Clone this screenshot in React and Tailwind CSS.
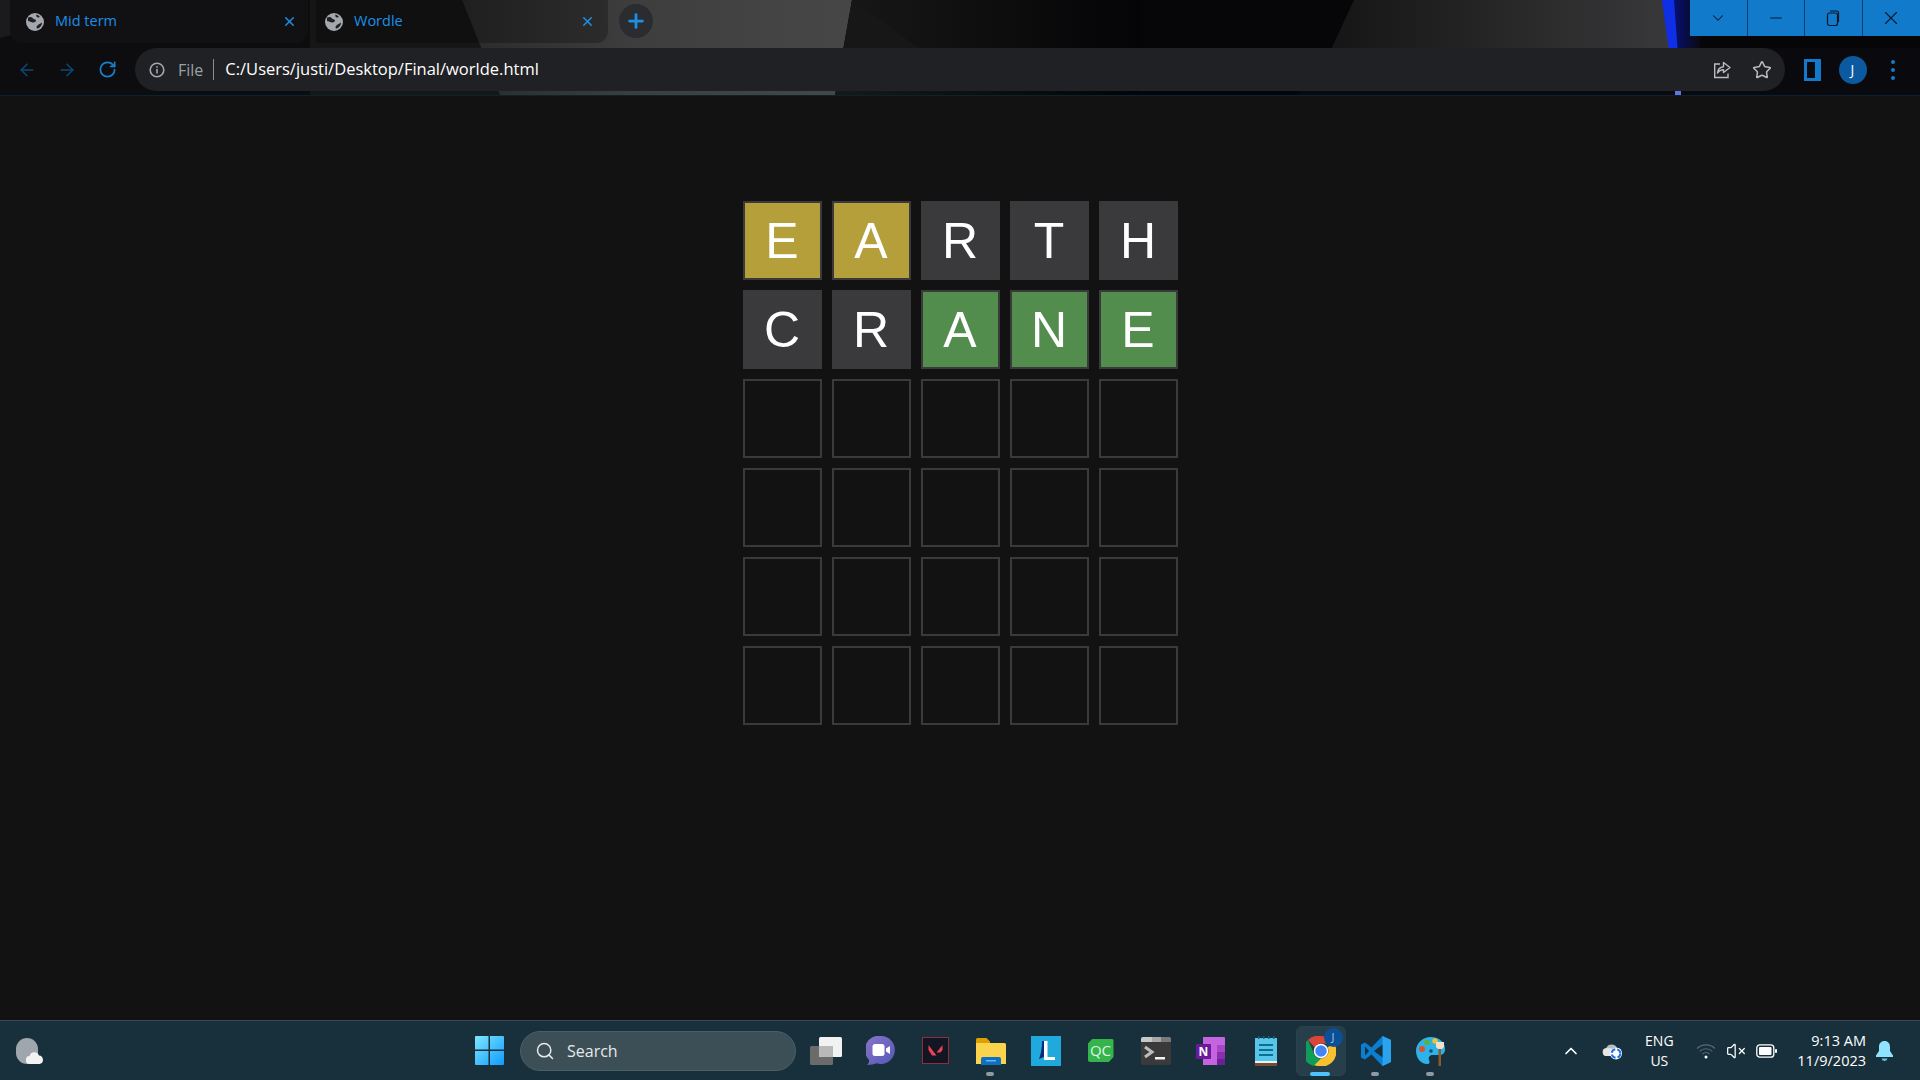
import { ArrowLeft, ArrowRight, RotateCw, Plus, X, Star, ChevronDown, ChevronUp, Minus, Search, VolumeX } from 'lucide-react';

const GUESSES = [
  [['E', 'y'], ['A', 'y'], ['R', 'x'], ['T', 'x'], ['H', 'x']],
  [['C', 'x'], ['R', 'x'], ['A', 'g'], ['N', 'g'], ['E', 'g']],
];

const TILE_COLORS = {
  y: 'bg-[#b59f3b]',
  g: 'bg-[#538d4e]',
  x: 'bg-[#3a3a3c]',
};

function Tile({ letter, state }) {
  return (
    <div className={`flex h-[79px] w-[79px] items-center justify-center border-2 border-[#3a3a3c] text-[50px] leading-none text-white ${state ? TILE_COLORS[state] : ''}`}>
      {letter}
    </div>
  );
}

function Board() {
  const rows = [...GUESSES, ...Array(4).fill(Array(5).fill(['', null]))];
  return (
    <div className="grid grid-cols-[repeat(5,79px)] gap-[10px] font-['Liberation_Sans',Arial,sans-serif]">
      {rows.flat().map(([letter, state], i) => (
        <Tile key={i} letter={letter} state={state} />
      ))}
    </div>
  );
}

function Wallpaper() {
  return (
    <svg className="absolute inset-0 h-[95px] w-full" viewBox="0 0 1920 95" preserveAspectRatio="none">
      <defs>
        <linearGradient id="wp-gray" x1="0" x2="1" y1="0" y2="0">
          <stop offset="0" stopColor="#2a2a2b" />
          <stop offset=".45" stopColor="#3e3e3e" />
          <stop offset="1" stopColor="#474747" />
        </linearGradient>
        <linearGradient id="wp-dark" x1="0" x2="1" y1="0" y2="0">
          <stop offset="0" stopColor="#181818" />
          <stop offset="1" stopColor="#040406" />
        </linearGradient>
        <linearGradient id="wp-right" x1="0" x2="1" y1="0" y2="0">
          <stop offset="0" stopColor="#131313" />
          <stop offset="1" stopColor="#39393b" />
        </linearGradient>
        <linearGradient id="wp-glow" x1="0" x2="1" y1="0" y2="0">
          <stop offset="0" stopColor="#06107a" />
          <stop offset="1" stopColor="#0a0a10" />
        </linearGradient>
      </defs>
      <rect width="1920" height="95" fill="#060608" />
      <polygon points="0,0 462,0 500,95 0,95" fill="#0d0d0f" />
      <polygon points="0,0 150,0 0,38" fill="#1b1b1e" />
      <polygon points="310,0 462,0 500,95 310,95" fill="#161617" />
      <polygon points="462,0 852,0 835,95 500,95" fill="url(#wp-gray)" />
      <polygon points="852,0 1140,0 1140,95 835,95" fill="url(#wp-dark)" />
      <polygon points="852,0 919,48 844,48" fill="#171717" />
      <polygon points="1354,0 1664,0 1676,95 1310,95" fill="url(#wp-right)" />
      <polygon points="1672,0 1700,0 1700,95 1680,95" fill="url(#wp-glow)" />
      <polygon points="1662,0 1674,0 1681,95 1675,95" fill="#0f2fe6" />
      <rect x="1300" y="91" width="375" height="4" fill="#0a0a0c" />
      <rect x="1675" y="91" width="6" height="4" fill="#6272e0" />
      <rect x="1681" y="48" width="239" height="47" fill="#0a0a0e" />
    </svg>
  );
}

function GlobeIcon() {
  return (
    <svg width="18" height="18" viewBox="0 0 18 18" className="shrink-0">
      <circle cx="9" cy="9" r="9" fill="#a4a7ad" />
      <path d="M2 4.500c2-1 4-.5 4.800.8.800 1.400 2.800.8 3.200 2 .4 1.300-1.400 2.400-3 2.200-1.800-.3-3.600-1.700-5-1.600z" fill="#202124" />
      <path d="M10.500 1.500c1.600.6 2.800 1.400 3.400 2.600-1 .6-2.800.4-3.400-.6-.3-.6-.3-1.300 0-2zM16 9.500c.2 2.600-1.600 5-4 6-1.400.3-1.800-1-1.200-2.200.8-1.800 3.200-2.300 5.200-3.800z" fill="#202124" />
    </svg>
  );
}

function Tab({ title, className }) {
  return (
    <div className={`flex h-[43px] w-[293px] shrink-0 items-center ${className}`}>
      <GlobeIcon />
      <span className="ml-[11px] flex-1 pb-[2px] text-[14.5px] leading-[18px] text-[#1c8fe8]">{title}</span>
      <X size={15} strokeWidth={2.4} className="text-[#1c8fe8]" />
    </div>
  );
}

function ShareIcon() {
  return (
    <svg width="20" height="20" viewBox="0 0 20 20" fill="none" stroke="#b9bcc0" strokeWidth="1.4">
      <path d="M8 4H2.700v13.500H16v-4" />
      <path d="M11.500 2.500 18 7.500l-6.500 5V9.700c-2.800 0-4.600 1.100-6 3.300.3-3.800 2.500-6 6-6.300z" strokeLinejoin="round" />
    </svg>
  );
}

function WindowButton({ children, last }) {
  return (
    <div className={`flex h-9 w-[57.5px] items-center justify-center bg-[#127acb] text-[#06192a] ${last ? '' : 'border-r border-[#0a3f6b]'}`}>
      {children}
    </div>
  );
}

function BrowserHeader() {
  return (
    <header className="relative h-[96px] shrink-0 border-b border-[#0b2231] font-['Open_Sans',sans-serif]">
      <Wallpaper />
      <div className="relative flex h-12 items-start">
        <Tab title="Mid term" className="ml-[10px] w-[298px] rounded-b-xl bg-[#111113] pl-4 pr-[11px]" />
        <Tab title="Wordle" className="ml-2 rounded-br-xl border-r border-[#3b3b3b] bg-black/25 pl-[9px] pr-[13px]" />
        <div className="ml-[10px] mt-1 flex h-[34px] w-[34px] items-center justify-center rounded-full bg-[#2b2c2f]">
          <Plus size={22} strokeWidth={3} className="text-[#1c8fe8]" />
        </div>
        <div className="ml-auto flex">
          <WindowButton><ChevronDown size={18} strokeWidth={1.4} /></WindowButton>
          <WindowButton><Minus size={18} strokeWidth={1.6} /></WindowButton>
          <WindowButton>
            <svg width="16" height="18" viewBox="0 0 16 18" fill="none" stroke="currentColor" strokeWidth="1.200">
              <rect x="2.500" y="4" width="10" height="12.500" rx="2" />
              <path d="M5 2h6.500a2 2 0 0 1 2 2v9" />
            </svg>
          </WindowButton>
          <WindowButton last><X size={22} strokeWidth={1.2} /></WindowButton>
        </div>
      </div>
      <div className="relative flex h-[43px] items-center">
        <div className="ml-[7px] flex">
          <div className="flex w-10 justify-center"><ArrowLeft size={20} strokeWidth={1.8} className="text-[#0b4a75]" /></div>
          <div className="flex w-10 justify-center"><ArrowRight size={20} strokeWidth={1.8} className="text-[#0b4a75]" /></div>
          <div className="flex w-10 justify-center"><RotateCw size={19} strokeWidth={2.2} className="text-[#1a7fc9]" /></div>
        </div>
        <div className="ml-2 flex h-[43px] flex-1 items-center rounded-full bg-[#202124] pl-[14px] pr-[13px]">
          <svg width="16" height="16" viewBox="0 0 16 16" fill="none" stroke="#a4a7ad" strokeWidth="1.6">
            <circle cx="8" cy="8" r="6.800" />
            <path d="M8 7v4.500M8 4.200v1.500" />
          </svg>
          <span className="ml-[13px] text-[16px] text-[#9aa0a6]">File</span>
          <span className="ml-[10px] h-[21px] w-px bg-[#8a8d91]" />
          <span className="ml-[11px] text-[16.5px] text-white">C:/Users/justi/Desktop/Final/worlde.html</span>
          <div className="ml-auto flex items-center gap-5">
            <ShareIcon />
            <Star size={20} strokeWidth={1.8} className="text-[#b9bcc0]" />
          </div>
        </div>
        <div className="flex w-[135px] items-center pl-[7px]">
          <div className="flex w-10 justify-center">
            <svg width="17" height="22" viewBox="0 0 17 22">
              <path d="M0 0h17v22H0zM3 3v16h8V3z" fillRule="evenodd" fill="#127acb" />
            </svg>
          </div>
          <div className="flex w-[41px] justify-center">
            <div className="flex h-7 w-7 items-center justify-center rounded-full bg-[#0b5aa0] text-sm text-white">J</div>
          </div>
          <div className="flex w-[39px] flex-col items-center gap-[4px]">
            <i className="h-1 w-1 rounded-full bg-[#127acb]" />
            <i className="h-1 w-1 rounded-full bg-[#127acb]" />
            <i className="h-1 w-1 rounded-full bg-[#127acb]" />
          </div>
        </div>
      </div>
    </header>
  );
}

function StartLogo() {
  return (
    <svg width="29" height="29" viewBox="0 0 29 29">
      <defs>
        <linearGradient id="win" x1="0" y1="0" x2="1" y2="1">
          <stop offset="0" stopColor="#7fe6ff" />
          <stop offset="1" stopColor="#0f9bff" />
        </linearGradient>
      </defs>
      <path d="M0 1a1 1 0 0 1 1-1h12.500v13.500H0zM15 0h13a1 1 0 0 1 1 1v12.500H15zM0 15h13.500v14H1a1 1 0 0 1-1-1zM15 15h14v13a1 1 0 0 1-1 1H15z" fill="url(#win)" />
    </svg>
  );
}

function TaskView() {
  return (
    <svg width="32" height="28" viewBox="0 0 32 28">
      <rect x="0" y="9" width="23" height="19" rx="1.500" fill="#6b6b6b" />
      <rect x="9" y="0" width="23" height="20" rx="1.500" fill="#f2f2f2" />
      <rect x="9" y="9" width="14" height="11" fill="#b9b9b9" />
    </svg>
  );
}

function ChatIcon() {
  return (
    <svg width="29" height="29" viewBox="0 0 29 29">
      <defs>
        <linearGradient id="chat" x1="0" y1="0" x2="1" y2="1">
          <stop offset="0" stopColor="#8a74c8" />
          <stop offset="1" stopColor="#5458b8" />
        </linearGradient>
      </defs>
      <path d="M15 0a14 14 0 1 1-4.500 27.300C8 28.500 5 29 1 29c1.600-1.500 2.200-3.200 2-5.200A14 14 0 0 1 15 0z" fill="url(#chat)" />
      <rect x="6.500" y="8" width="12" height="12" rx="2.500" fill="#fff" />
      <path d="M20 12.500 24 10v8l-4-2.500z" fill="#fff" />
    </svg>
  );
}

function ValorantIcon() {
  return (
    <svg width="27" height="27" viewBox="0 0 27 27">
      <rect x=".5" y=".5" width="26" height="26" fill="#111622" stroke="#8e2f3c" />
      <path d="M6.500 8 14.500 18.500H10L6.500 13zM20.500 8v5l-2 2.500h-4z" fill="#ee4155" />
    </svg>
  );
}

function FolderIcon() {
  return (
    <svg width="30" height="28" viewBox="0 0 30 28">
      <path d="M0 2.500A1.500 1.500 0 0 1 1.500 1h9l3.500 3.500v3H0z" fill="#dca000" />
      <path d="M0 6h28.500A1.500 1.500 0 0 1 30 7.500V27H0z" fill="#fcd34d" />
      <rect x="5" y="21" width="20" height="7" fill="#fbbf24" />
      <path d="M5 22a2 2 0 0 1 2-2h16a2 2 0 0 1 2 2v6H5z" fill="#0f6fc0" />
      <rect x="10" y="23" width="10" height="1.500" fill="#65b6f0" />
    </svg>
  );
}

function LIcon() {
  return (
    <div className="relative flex h-[30px] w-[30px] items-center justify-center bg-[#1fa9dc]">
      <svg width="30" height="30" viewBox="0 0 30 30">
        <path d="M11 5h4v15l-7 3c2-5 3-12 3-18z" fill="#0b2a7a" />
        <path d="M13 5h3.500v16H24v3H13z" fill="#fff" />
      </svg>
    </div>
  );
}

function QtIcon() {
  return (
    <div className="flex h-[23px] w-[26px] items-center justify-center rounded-[2px] bg-[#35b44c] text-[15px] leading-none text-[#dff5e2] [clip-path:polygon(18%_0,100%_0,100%_78%,82%_100%,0_100%,0_22%)]">
      QC
    </div>
  );
}

function TerminalIcon() {
  return (
    <svg width="30" height="28" viewBox="0 0 30 28">
      <rect width="30" height="28" rx="2" fill="#3a3a3a" />
      <path d="M2 0h9v5H0V2a2 2 0 0 1 2-2z" fill="#c8c8c8" />
      <rect x="11" y="0" width="9" height="5" fill="#a8a8a8" />
      <path d="M20 0h8a2 2 0 0 1 2 2v3H20z" fill="#7a7a7a" />
      <path d="m4 10 7 5-7 5" fill="none" stroke="#bdbdbd" strokeWidth="3" />
      <rect x="14" y="20" width="10" height="2.500" fill="#f2f2f2" />
    </svg>
  );
}

function OneNoteIcon() {
  return (
    <svg width="29" height="28" viewBox="0 0 29 28">
      <path d="M7 0h21a1 1 0 0 1 1 1v26a1 1 0 0 1-1 1H7z" fill="#c564e0" />
      <rect x="21" y="8" width="8" height="7" fill="#a946c8" />
      <rect x="21" y="15" width="8" height="7" fill="#8b2fae" />
      <rect x="21" y="22" width="8" height="6" fill="#6d1f95" />
      <rect x="0" y="7" width="15" height="15" rx="1" fill="#6a1b9a" />
      <text x="7.500" y="19" textAnchor="middle" fontSize="12" fontWeight="700" fill="#fff" fontFamily="Open Sans">N</text>
    </svg>
  );
}

function NotepadIcon() {
  return (
    <svg width="22" height="30" viewBox="0 0 22 30">
      <path d="M0 2h22v26H0z" fill="#58c6e8" />
      <path d="M0 26h22v4H0z" fill="#7a4a2a" />
      <path d="M0 25h22v2H0z" fill="#dff3fa" />
      <path d="M3 0h1.500v3H3zM8 0h1.500v3H8zM13 0h1.500v3H13zM18 0h1.500v3H18z" fill="#16627f" />
      <path d="M4 8h14v2H4zM4 13h14v2H4zM4 18h14v2H4z" fill="#0f6d8f" />
    </svg>
  );
}

function ChromeIcon() {
  return (
    <div className="relative h-[30px] w-[30px]">
      <svg width="30" height="30" viewBox="0 0 30 30">
        <path d="M15 0a15 15 0 0 1 13 7.500H15a7.500 7.500 0 0 0-6.500 3.800L2 3.900A15 15 0 0 1 15 0z" fill="#db4437" />
        <path d="M2 3.900 8.500 19a7.500 7.500 0 0 0 6.500 3.500L8.500 30A15 15 0 0 1 2 3.900z" fill="#0f9d58" />
        <path d="M28 7.500A15 15 0 0 1 8.500 29l6.500-6.500a7.500 7.500 0 0 0 6.500-11.200z" fill="#fbc02d" />
        <circle cx="15" cy="15" r="6.500" fill="#4285f4" stroke="#fff" strokeWidth="1.500" />
      </svg>
      <div className="absolute -right-[7px] -top-2 flex h-[19px] w-[19px] items-center justify-center rounded-full bg-[#0b4f96] text-[11px] text-[#9fc6ee]">J</div>
    </div>
  );
}

function VSCodeIcon() {
  return (
    <svg width="30" height="30" viewBox="0 0 30 30">
      <path d="M21.500 0 30 4v22l-8.500 4-11-11.500L4 23.500 0 21.500V8.500l4-2 6.500 5z" fill="#0a7fd1" />
      <path d="M21.500 0 30 4v22l-8.500 4z" fill="#2aa3ef" />
      <path d="M21.500 8.500v13L13 15z" fill="#18303b" />
      <path d="M4 10.500 8 15l-4 4.500z" fill="#18303b" />
    </svg>
  );
}

function PaintIcon() {
  return (
    <svg width="30" height="30" viewBox="0 0 30 30">
      <path d="M15 1C7 1 0 7 0 15c0 7 5 13 11 13 3 0 3-2 2-4-1-3 1-5 4-5h6c4 0 6-2 6-6C29 6 23 1 15 1z" fill="#2fb1ea" />
      <circle cx="6" cy="13" r="3" fill="#d9542b" />
      <circle cx="11" cy="6.500" r="2.700" fill="#5cb531" />
      <circle cx="19" cy="5" r="2.700" fill="#f4c12a" />
      <circle cx="15" cy="15" r="1.800" fill="#12506e" />
      <rect x="22.500" y="11" width="2.500" height="19" fill="#8a5a2b" />
      <path d="M20 6h8v5l-2 2h-4l-2-2z" fill="#f2e3c6" />
    </svg>
  );
}

const PINNED = [
  { icon: <TaskView /> },
  { icon: <ChatIcon /> },
  { icon: <ValorantIcon /> },
  { icon: <FolderIcon />, open: true },
  { icon: <LIcon /> },
  { icon: <QtIcon /> },
  { icon: <TerminalIcon /> },
  { icon: <OneNoteIcon /> },
  { icon: <NotepadIcon /> },
  { icon: <ChromeIcon />, active: true },
  { icon: <VSCodeIcon />, open: true },
  { icon: <PaintIcon />, open: true },
];

function TaskbarItem({ icon, open, active }) {
  return (
    <div className="relative flex h-[50px] w-[55px] items-center justify-center">
      {active && <div className="absolute inset-y-0 left-[3px] w-[50px] rounded-md border border-[#2b424e] bg-[#263f4b]" />}
      <div className="relative">{icon}</div>
      {open && <i className="absolute bottom-0 left-[23px] h-1 w-2 rounded-full bg-[#8f9aa0]" />}
      {active && <i className="absolute bottom-0 left-[17px] h-1 w-5 rounded-full bg-[#4fc3f7]" />}
    </div>
  );
}

function Tray() {
  return (
    <div className="flex items-center justify-self-end text-white">
      <ChevronUp size={20} strokeWidth={2} className="mr-[20px]" />
      <svg width="22" height="18" viewBox="0 0 22 18" className="mr-[20px]">
        <path d="M6 14a4 4 0 0 1-.8-8A6 6 0 0 1 16 6a4 4 0 0 1 1 8z" fill="#b8bcbe" />
        <path d="M5 14a4 4 0 0 1 .2-7.800h4a4 4 0 0 1 .8 7.800z" fill="#e6e6e6" />
        <circle cx="15" cy="11.500" r="6" fill="#fff" />
        <circle cx="15" cy="11.500" r="4.300" fill="none" stroke="#1a73e8" strokeWidth="2" strokeDasharray="5 2" />
      </svg>
      <div className="mr-[21px] w-[32px] text-center text-[14px] leading-5">
        <div>ENG</div>
        <div>US</div>
      </div>
      <svg width="20" height="16" viewBox="0 0 20 16" fill="none" stroke="#5d6a70" strokeWidth="1.1" className="mr-[10px]">
        <path d="M1 5.500a13 13 0 0 1 18 0M3.700 8.300a9 9 0 0 1 12.600 0M6.500 11a5 5 0 0 1 7 0" />
        <circle cx="10" cy="14" r="1.500" fill="#fff" stroke="none" />
      </svg>
      <VolumeX size={20} strokeWidth={1.5} className="mr-[10px]" />
      <svg width="21" height="14" viewBox="0 0 21 14" className="mr-[20px]">
        <rect x=".8" y=".8" width="17" height="12.400" rx="3" fill="none" stroke="#fff" strokeWidth="1.3" />
        <rect x="3" y="3" width="12.500" height="8" rx="1" fill="#fff" />
        <rect x="19" y="5" width="2" height="4" rx="1" fill="#fff" />
      </svg>
      <div className="text-right text-[14.5px] leading-5">
        <div>9:13 AM</div>
        <div>11/9/2023</div>
      </div>
      <svg width="17" height="20" viewBox="0 0 17 20" className="ml-[10px] mr-[27px]">
        <path d="M8.500 0C5 0 3 2.500 3 6v4l-3 4.500V16h17v-1.500L14 10V6c0-3.500-2-6-5.500-6z" fill="#8fe3ff" />
        <path d="M5.500 17.500h6A3 3 0 0 1 8.500 20a3 3 0 0 1-3-2.500z" fill="#5cc4e6" />
      </svg>
    </div>
  );
}

function Taskbar() {
  return (
    <footer className="grid h-[60px] shrink-0 grid-cols-[1fr_auto_1fr] items-center border-t border-[#3a4b54] bg-[#18303b] font-['Open_Sans',sans-serif]">
      <div className="pl-4">
        <div className="relative h-[26px] w-[27px]">
          <div className="h-[26px] w-[22px] rounded-full bg-[#a0a6ad]" />
          <svg width="17" height="13" viewBox="0 0 17 13" className="absolute bottom-0 right-0">
            <path d="M4 13a4 4 0 0 1-.5-8A5 5 0 0 1 13 4.500a4.300 4.300 0 0 1 .5 8.500z" fill="#f2f2f2" />
          </svg>
        </div>
      </div>
      <div className="flex items-center">
        <div className="flex w-[58px] justify-center pr-[3px]"><StartLogo /></div>
        <div className="flex h-10 w-[276px] items-center rounded-full border border-[#4a5f68] bg-[#3c4f57] pl-[14px] text-[#e6e9ea]">
          <Search size={20} strokeWidth={1.8} />
          <span className="ml-3 text-[16px]">Search</span>
        </div>
        <div className="ml-[2px] flex">
          {PINNED.map((item, i) => (
            <TaskbarItem key={i} {...item} />
          ))}
        </div>
      </div>
      <Tray />
    </footer>
  );
}

export default function App() {
  return (
    <div className="flex h-screen w-full flex-col overflow-hidden bg-[#121213]">
      <BrowserHeader />
      <main className="flex flex-1 items-start justify-center pt-[105px]">
        <Board />
      </main>
      <Taskbar />
    </div>
  );
}
